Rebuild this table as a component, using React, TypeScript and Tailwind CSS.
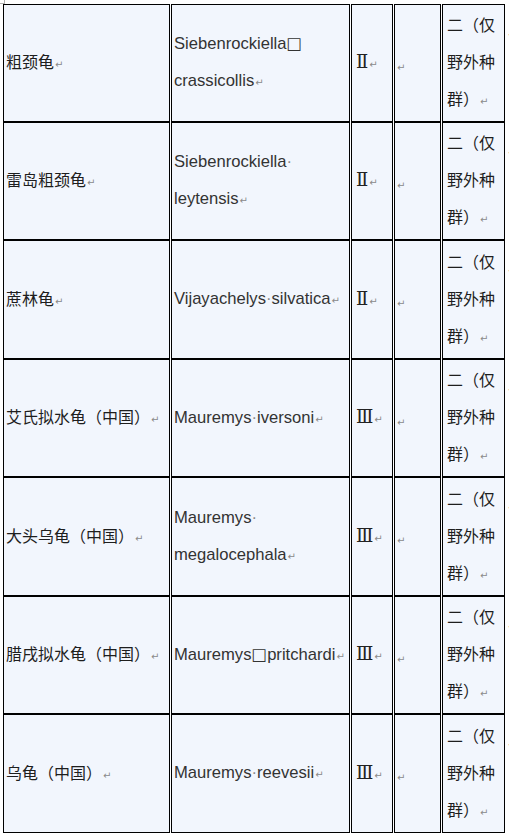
import React from "react";

type Row = { cn: string; latin: React.ReactNode[]; level: string };

const Mark = () => (
  <span className="text-[10px] text-[#8a8a8a] ml-[1px] align-baseline" style={{ fontFamily: "'DejaVu Sans', sans-serif" }}>
    ↵
  </span>
);
const Dot = () => <span className="text-[#8a8a8a]">·</span>;
const Box = () => (
  <span className="text-[#333]" style={{ fontFamily: "'DejaVu Sans', sans-serif" }}>
    □
  </span>
);

const rows: Row[] = [
  { cn: "粗颈龟", latin: [<>Siebenrockiella<Box /></>, <>crassicollis<Mark /></>], level: "Ⅱ" },
  { cn: "雷岛粗颈龟", latin: [<>Siebenrockiella<Dot /></>, <>leytensis<Mark /></>], level: "Ⅱ" },
  { cn: "蔗林龟", latin: [<>Vijayachelys<Dot />silvatica<Mark /></>], level: "Ⅱ" },
  { cn: "艾氏拟水龟（中国）", latin: [<>Mauremys<Dot />iversoni<Mark /></>], level: "Ⅲ" },
  { cn: "大头乌龟（中国）", latin: [<>Mauremys<Dot /></>, <>megalocephala<Mark /></>], level: "Ⅲ" },
  { cn: "腊戌拟水龟（中国）", latin: [<>Mauremys<Box />pritchardi<Mark /></>], level: "Ⅲ" },
  { cn: "乌龟（中国）", latin: [<>Mauremys<Dot />reevesii<Mark /></>], level: "Ⅲ" },
];

const heights = ["h-[118px]", "h-[118px]", "h-[119px]", "h-[118px]", "h-[119px]", "h-[118px]", "h-[119px]"];

const cell = "border border-black bg-[#f2f6fd] flex flex-col justify-center shrink-0 leading-[37px]";
const cnFont = { fontFamily: "'Noto Sans CJK SC', sans-serif" };
const latFont = { fontFamily: "'Liberation Sans', Arial, sans-serif" };

export default function App() {
  return (
    <div className="relative bg-white w-[509px] h-[835px] overflow-hidden">
      <div className="absolute left-0 top-0 w-[5px] h-[4px] border-r border-b border-[#b0b0b0]" />
      <div className="pt-[4px] pl-[3px] flex flex-col">
        {rows.map((r, i) => (
          <div key={i} className={`flex gap-[1px] ${heights[i]}`}>
            <div className={`${cell} w-[167px] pl-[2px] text-[16px] text-[#1e1e1e]`} style={cnFont}>
              <div>
                {r.cn}
                <Mark />
              </div>
            </div>
            <div className={`${cell} w-[179px] pl-[2px] text-[16.6px] text-[#333]`} style={latFont}>
              {r.latin.map((l, j) => (
                <div key={j} className="whitespace-nowrap">
                  {l}
                </div>
              ))}
            </div>
            <div className={`${cell} w-[42px] pl-[4px] text-[18px] text-[#222]`} style={{ fontFamily: "'DejaVu Serif', serif" }}>
              <div>
                {r.level}
                <Mark />
              </div>
            </div>
            <div className={`${cell} w-[47px] pl-[1px] text-[15px]`}>
              <div className="pt-[6px]">
                <Mark />
              </div>
            </div>
            <div className={`${cell} w-[63px] pl-[4px] text-[16px] text-[#1e1e1e]`} style={cnFont}>
              <div className="whitespace-nowrap">二（仅</div>
              <div className="whitespace-nowrap">野外种</div>
              <div className="whitespace-nowrap">
                群）
                <Mark />
              </div>
            </div>
            <div className="self-start mt-[16px] ml-[1px]">
              <Mark />
            </div>
          </div>
        ))}
      </div>
    </div>
  );
}
